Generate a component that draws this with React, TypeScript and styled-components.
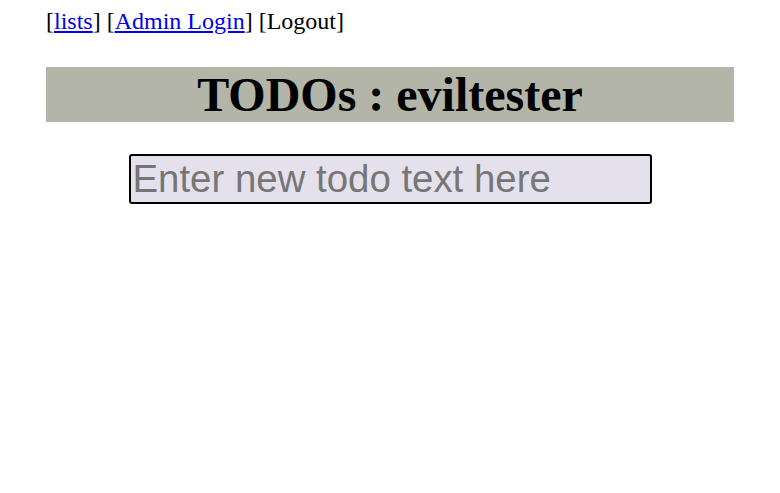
import React from "react";
import styled, { createGlobalStyle } from "styled-components";

const GlobalStyle = createGlobalStyle`
  body {
    margin: 0;
    background: #ffffff;
    font-family: "Liberation Serif", "Times New Roman", serif;
  }
`;

const Page = styled.div`
  padding: 0 46px;
`;

const Nav = styled.nav`
  font-size: 24px;
  line-height: 28px;
  padding-top: 7px;
  color: #000;
  a {
    color: #0000ee;
    text-decoration: underline;
  }
`;

const Header = styled.h1`
  margin: 32px 0 0;
  background: #b3b5a9;
  text-align: center;
  font-size: 48px;
  font-weight: bold;
  line-height: 55px;
  height: 55px;
`;

const Form = styled.form`
  display: flex;
  justify-content: center;
  margin-top: 32px;
`;

const TodoInput = styled.input`
  box-sizing: border-box;
  width: 523px;
  height: 50px;
  border: 2px solid #000;
  border-radius: 3px;
  background: #e4e1ec;
  font-family: "Liberation Sans", Arial, sans-serif;
  font-size: 38.4px;
  padding: 0 2px;
  outline: none;
  &::placeholder {
    color: #767676;
  }
`;

export default function App() {
  return (
    <Page>
      <GlobalStyle />
      <Nav>
        [<a href="#">lists</a>] [<a href="#">Admin Login</a>] [Logout]
      </Nav>
      <Header>TODOs : eviltester</Header>
      <Form onSubmit={(e) => e.preventDefault()}>
        <TodoInput placeholder="Enter new todo text here" />
      </Form>
    </Page>
  );
}
